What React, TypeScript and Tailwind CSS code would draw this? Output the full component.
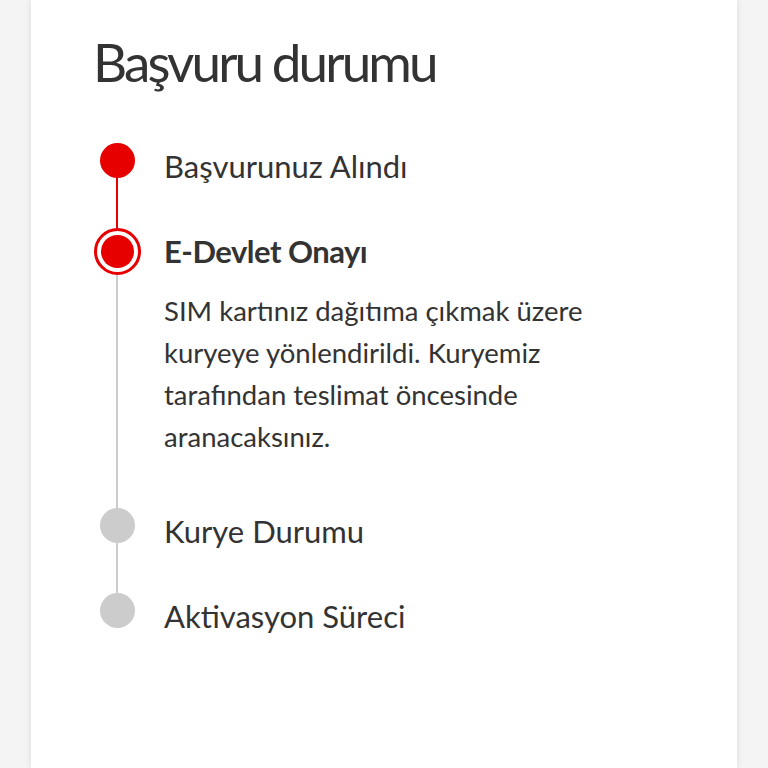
import React from 'react';

type Step = {
  title: string;
  state: 'done' | 'active' | 'pending';
  description?: string;
};

const steps: Step[] = [
  { title: 'Başvurunuz Alındı', state: 'done' },
  {
    title: 'E-Devlet Onayı',
    state: 'active',
    description:
      'SIM kartınız dağıtıma çıkmak üzere kuryeye yönlendirildi. Kuryemiz tarafından teslimat öncesinde aranacaksınız.',
  },
  { title: 'Kurye Durumu', state: 'pending' },
  { title: 'Aktivasyon Süreci', state: 'pending' },
];

const Dot: React.FC<{ state: Step['state'] }> = ({ state }) => {
  if (state === 'active') {
    return (
      <div className="w-[47px] h-[47px] rounded-full border-[3px] border-[#e60000] p-[4px] bg-white shrink-0">
        <div className="w-full h-full rounded-full bg-[#e60000]" />
      </div>
    );
  }
  return (
    <div
      className={`w-[35px] h-[35px] rounded-full shrink-0 ${state === 'done' ? 'bg-[#e60000]' : 'bg-[#cccccc]'}`}
    />
  );
};

export default function App() {
  return (
    <div className="min-h-screen bg-[#f4f4f4] flex justify-center" style={{ fontFamily: 'Lato, "Noto Sans", sans-serif' }}>
      <div className="w-[706px] min-h-screen bg-white shadow-[0_0_6px_rgba(0,0,0,0.12)] pl-[62px] pr-8 pt-[30px]">
        <h1 className="text-[53px] leading-[64px] text-[#333333] tracking-[-2.9px] mb-[49px]">Başvuru durumu</h1>

        <div className="flex flex-col">
          {steps.map((step, i) => {
            const isLast = i === steps.length - 1;
            const lineColor = step.state === 'done' ? 'bg-[#e60000]' : 'bg-[#cccccc]';
            return (
              <div key={step.title} className="flex">
                <div className="w-[48px] flex flex-col items-center">
                  <Dot state={step.state} />
                  {!isLast && <div className={`w-[2px] flex-1 ${lineColor}`} />}
                </div>
                <div className={`ml-[23px] flex-1 ${isLast ? '' : 'pb-[50px]'}`}>
                  <div
                    className={`flex items-center ${step.state === 'active' ? 'h-[47px] font-bold tracking-[-0.5px]' : 'h-[35px] pt-[12px]'} text-[31px] text-[#333333]`}
                  >
                    {step.title}
                  </div>
                  {step.description && (
                    <p className="mt-[15px] max-w-[450px] text-[27.5px] leading-[42px] text-[#333333]">
                      {step.description}
                    </p>
                  )}
                </div>
              </div>
            );
          })}
        </div>
      </div>
    </div>
  );
}
